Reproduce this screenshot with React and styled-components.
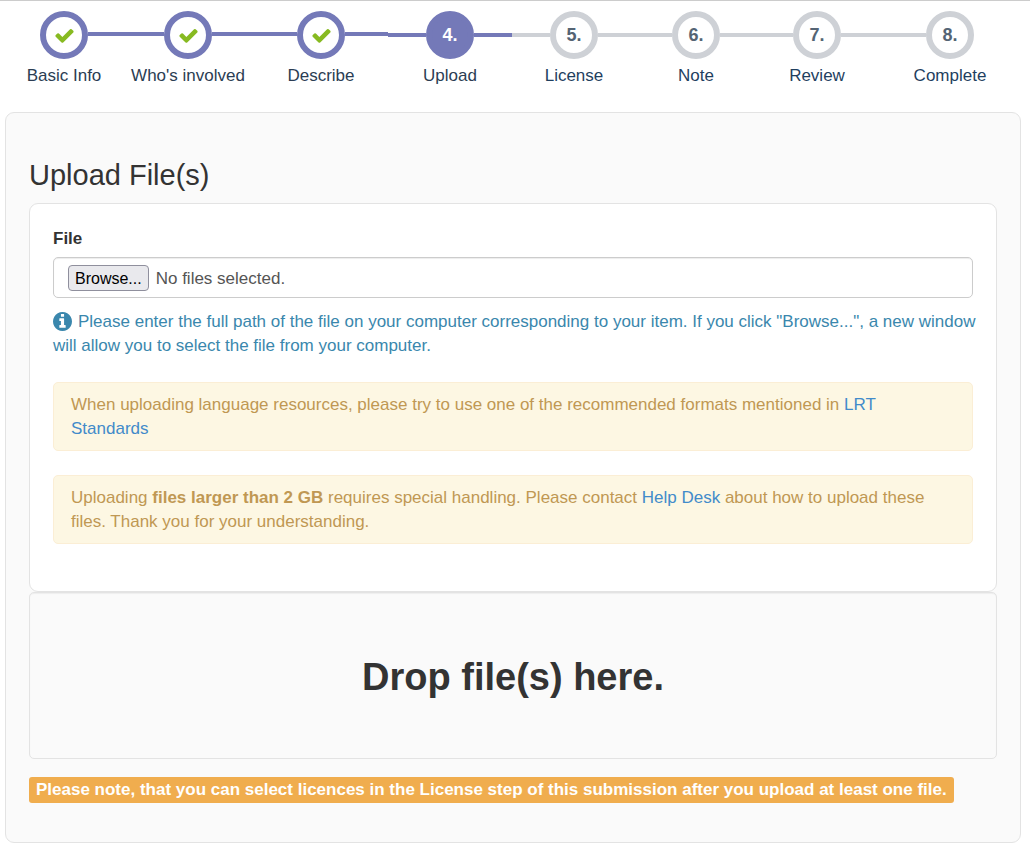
import React, { useRef, useState } from "react";
import styled, { createGlobalStyle } from "styled-components";

const GlobalStyle = createGlobalStyle`
  * {
    box-sizing: border-box;
  }

  body {
    margin: 0;
    background: #fff;
    color: #333;
    font-family: "Liberation Sans", Arial, sans-serif;
    font-size: 17px;
    line-height: 24px;
  }
`;

const Page = styled.div`
  border-top: 1px solid #ccc;
  padding: 10px 0 7px;
`;

const Steps = styled.ol`
  display: grid;
  grid-template-columns: 116fr 132fr 134fr 124fr 124fr 120fr 122fr 144fr;
  list-style: none;
  margin: 0 8px 24px 6px;
  padding: 0;
`;

const Step = styled.li`
  display: flex;
  flex-direction: column;
  gap: 5px;
  text-align: center;
`;

const Track = styled.div`
  display: flex;
  align-items: center;
`;

const Line = styled.span`
  flex: 1;
  height: 4px;
  margin-bottom: ${props => (props.$raised ? "2px" : "0")};
  background: ${props => props.$color};
`;

const Circle = styled.span`
  display: flex;
  align-items: center;
  justify-content: center;
  width: 48px;
  height: 48px;
  border: 6px solid ${props => (props.$state === "todo" ? "#ced1d6" : "#7479b8")};
  border-radius: 50%;
  background: ${props => (props.$state === "active" ? "#7479b8" : "#fff")};
  color: ${props => (props.$state === "active" ? "#fff" : "#546474")};
  font-size: 18px;
  font-weight: bold;
`;

const StepLabel = styled.a`
  color: ${props => (props.$state === "todo" ? "#1f3f5f" : "#2b3d53")};
  text-decoration: none;
`;

const CheckIcon = styled.svg`
  width: 21px;
  height: 21px;
  fill: #87ba21;
`;

const Panel = styled.main`
  margin: 0 9px 0 5px;
  border: 1px solid #e3e3e3;
  border-radius: 9px;
  padding: 46px 23px 39px;
  background: #fafafa;
`;

const Title = styled.h1`
  margin: 0 0 12px;
  font-size: 29px;
  font-weight: normal;
  line-height: 32px;
`;

const Card = styled.section`
  border: 1px solid #e3e3e3;
  border-radius: 9px;
  padding: 23px 23px 47px;
  background: #fff;
`;

const Label = styled.label`
  display: block;
  margin-bottom: 6px;
  font-weight: bold;
`;

const FileField = styled.div`
  position: relative;
  display: flex;
  align-items: baseline;
  gap: 7px;
  height: 41px;
  border: 1px solid #ccc;
  border-radius: 5px;
  padding: 7px 14px;
  background: #fff;
  box-shadow: inset 0 1px 1px rgba(0, 0, 0, 0.075);
  color: #555;
`;

const HiddenInput = styled.input`
  position: absolute;
  width: 1px;
  height: 1px;
  opacity: 0;
  pointer-events: none;
`;

const BrowseButton = styled.button`
  height: 26px;
  border: 1px solid #8f8f9d;
  border-radius: 4px;
  padding: 2px 6px 0;
  background: #e9e9ed;
  color: #000;
  font-family: inherit;
  font-size: 16px;
  line-height: 22px;
`;

const Help = styled.p`
  margin: 12px -8px 24px 0;
  color: #3a87ad;
`;

const InfoIcon = styled.svg`
  width: 19px;
  height: 19px;
  margin-right: 6px;
  vertical-align: -4px;
  fill: currentColor;
`;

const Alert = styled.p`
  margin: 0;
  border: 1px solid #fbeed5;
  border-radius: 5px;
  padding: 10px 42px 9px 17px;
  background: #fdf7e3;
  color: #c09853;

  & + & {
    margin-top: 24px;
  }
`;

const Link = styled.a`
  color: #428bca;
  text-decoration: none;
`;

const DropZone = styled.div`
  border: 1px solid #e3e3e3;
  border-radius: 5px;
  padding: 60px 20px 57px;
  box-shadow: inset 0 1px 1px rgba(0, 0, 0, 0.05);
  text-align: center;
  font-size: 38px;
  font-weight: bold;
  line-height: 48px;
`;

const Note = styled.strong`
  display: inline-block;
  margin-top: 18px;
  border-radius: 3px;
  padding: 1px 7px;
  background: #f0ad4e;
  color: #fff;
`;

const PURPLE = "#7479b8";
const GREY = "#ced1d6";

const steps = [
  "Basic Info",
  "Who's involved",
  "Describe",
  "Upload",
  "License",
  "Note",
  "Review",
  "Complete"
];

const current = 3;

const getState = index =>
  index < current ? "done" : index === current ? "active" : "todo";

const Check = () => (
  <CheckIcon viewBox="0 0 1792 1792" aria-hidden="true">
    <path d="M1671 566q0 40-28 68l-724 724-136 136q-28 28-68 28t-68-28l-136-136-362-362q-28-28-28-68t28-68l136-136q28-28 68-28t68 28l294 295 656-657q28-28 68-28t68 28l136 136q28 28 28 68z" />
  </CheckIcon>
);

const Info = () => (
  <InfoIcon viewBox="128 128 1536 1536" aria-hidden="true">
    <path d="M1152 1376v-160q0-14-9-23t-23-9h-96v-512q0-14-9-23t-23-9h-320q-14 0-23 9t-9 23v160q0 14 9 23t23 9h96v320h-96q-14 0-23 9t-9 23v160q0 14 9 23t23 9h448q14 0 23-9t9-23zm-128-896v-160q0-14-9-23t-23-9h-192q-14 0-23 9t-9 23v160q0 14 9 23t23 9h192q14 0 23-9t9-23zm640 416q0 209-103 385.5t-279.5 279.5-385.5 103-385.5-103-279.5-279.5-103-385.5 103-385.5 279.5-279.5 385.5-103 385.5 103 279.5 279.5 103 385.5z" />
  </InfoIcon>
);

const StepItem = ({ label, index }) => {
  const state = getState(index);
  const color = state === "todo" ? GREY : PURPLE;
  const raised = state === "done";

  return (
    <Step aria-current={state === "active" ? "step" : undefined}>
      <Track>
        <Line $color={index === 0 ? "transparent" : color} $raised={raised} />
        <Circle $state={state}>
          {state === "done" ? <Check /> : `${index + 1}.`}
        </Circle>
        <Line
          $color={index === steps.length - 1 ? "transparent" : color}
          $raised={raised}
        />
      </Track>
      <StepLabel href="#" $state={state}>
        {label}
      </StepLabel>
    </Step>
  );
};

const App = () => {
  const input = useRef(null);
  const [files, setFiles] = useState([]);

  const onDrop = event => {
    event.preventDefault();
    setFiles(Array.from(event.dataTransfer.files));
  };

  return (
    <>
      <GlobalStyle />
      <Page>
        <Steps>
          {steps.map((label, index) => (
            <StepItem key={label} label={label} index={index} />
          ))}
        </Steps>
        <Panel>
          <Title>Upload File(s)</Title>
          <Card>
            <Label htmlFor="file">File</Label>
            <FileField>
              <HiddenInput
                id="file"
                type="file"
                multiple
                tabIndex={-1}
                ref={input}
                onChange={event => setFiles(Array.from(event.target.files))}
              />
              <BrowseButton type="button" onClick={() => input.current.click()}>
                Browse...
              </BrowseButton>
              <span>
                {files.length
                  ? files.map(file => file.name).join(", ")
                  : "No files selected."}
              </span>
            </FileField>
            <Help>
              <Info />
              Please enter the full path of the file on your computer
              corresponding to your item. If you click "Browse...", a new window
              will allow you to select the file from your computer.
            </Help>
            <Alert>
              When uploading language resources, please try to use one of the
              recommended formats mentioned in <Link href="#">LRT Standards</Link>
            </Alert>
            <Alert>
              Uploading <strong>files larger than 2 GB</strong> requires special
              handling. Please contact <Link href="#">Help Desk</Link> about how
              to upload these files. Thank you for your understanding.
            </Alert>
          </Card>
          <DropZone
            onDragOver={event => event.preventDefault()}
            onDrop={onDrop}
          >
            Drop file(s) here.
          </DropZone>
          <Note>
            Please note, that you can select licences in the License step of
            this submission after you upload at least one file.
          </Note>
        </Panel>
      </Page>
    </>
  );
};

export default App;
